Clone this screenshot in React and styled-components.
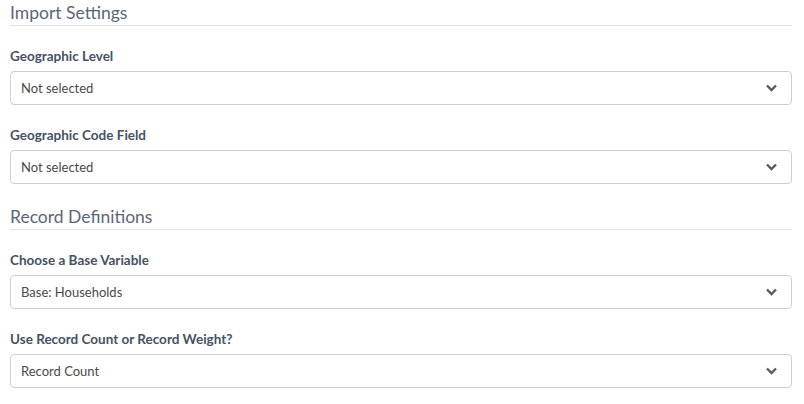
import React from 'react';
import styled, { createGlobalStyle } from 'styled-components';

const GlobalStyle = createGlobalStyle`
  body {
    margin: 0;
    background: #fff;
    font-family: 'Lato', 'Liberation Sans', sans-serif;
  }
`;

const Page = styled.div`
  padding: 0 12px 0 10px;
`;

const Section = styled.section`
  display: flex;
  flex-direction: column;
`;

const SectionTitle = styled.h2`
  margin: 0;
  padding: 3px 0 2px;
  font-size: 17.5px;
  font-weight: 400;
  line-height: 20px;
  color: #5b6679;
  border-bottom: 1px solid #e3e3e3;
`;

const Field = styled.div`
  display: flex;
  flex-direction: column;
  padding-top: 22px;
`;

const Label = styled.label`
  font-size: 13.5px;
  font-weight: 700;
  line-height: 16px;
  color: #465164;
  margin-bottom: 7px;
`;

const Select = styled.div`
  display: flex;
  align-items: center;
  justify-content: space-between;
  height: 32px;
  padding: 0 14px 0 10px;
  border: 1px solid #cfcfcf;
  border-radius: 4px;
  font-size: 13px;
  color: #4a4a4a;
`;

const Chevron = () => (
  <svg width="11" height="8" viewBox="0 0 11 8">
    <path d="M1 1.5 L5.5 6 L10 1.5" fill="none" stroke="#5a5a5a" strokeWidth="2.4" />
  </svg>
);

const sections = [
  {
    title: 'Import Settings',
    fields: [
      { label: 'Geographic Level', value: 'Not selected' },
      { label: 'Geographic Code Field', value: 'Not selected' },
    ],
  },
  {
    title: 'Record Definitions',
    fields: [
      { label: 'Choose a Base Variable', value: 'Base: Households' },
      { label: 'Use Record Count or Record Weight?', value: 'Record Count' },
    ],
  },
];

const Spacer = styled.div`
  height: 20px;
`;

export default function App() {
  return (
    <>
      <GlobalStyle />
      <Page>
        {sections.map((s, i) => (
          <Section key={s.title}>
            {i > 0 && <Spacer />}
            <SectionTitle>{s.title}</SectionTitle>
            {s.fields.map(f => (
              <Field key={f.label}>
                <Label>{f.label}</Label>
                <Select>
                  <span>{f.value}</span>
                  <Chevron />
                </Select>
              </Field>
            ))}
          </Section>
        ))}
      </Page>
    </>
  );
}
